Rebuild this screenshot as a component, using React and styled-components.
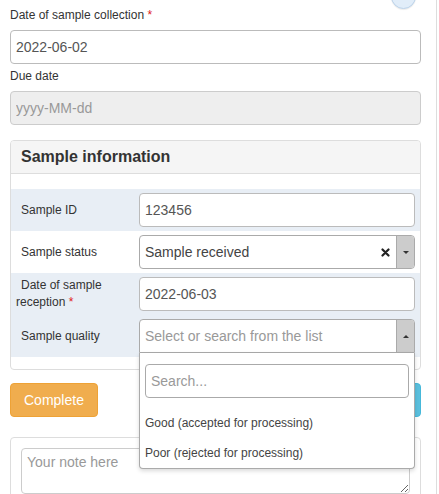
import React from "react";
import styled, { createGlobalStyle } from "styled-components";

const GlobalStyle = createGlobalStyle`
  body {
    margin: 0;
    background: #fff;
    font-family: "Liberation Sans", Arial, sans-serif;
    font-size: 12px;
    color: #333;
  }
  * { box-sizing: border-box; }
`;

const rows = [
  { label: "Sample ID", kind: "input", value: "123456", shade: true },
  { label: "Sample status", kind: "select", value: "Sample received", shade: false },
  { label: "Date of sample reception", required: true, kind: "input", value: "2022-06-03", shade: true },
  { label: "Sample quality", kind: "open", shade: true },
];

const options = ["Good (accepted for processing)", "Poor (rejected for processing)"];

const Caret = ({ up }) => <CaretMark $up={up} />;

const ClearIcon = () => (
  <svg width="9" height="9" viewBox="0 0 9 9">
    <path d="M1.5 1.5 L7.5 7.5 M7.5 1.5 L1.5 7.5" stroke="#222" strokeWidth="2.2" strokeLinecap="round" />
  </svg>
);

const Select = ({ value, open, placeholder }) => (
  <SelectWrap>
    <SelectBox $open={open}>
      <SelectValue $placeholder={!value}>{value || placeholder}</SelectValue>
      {value && (
        <Clear>
          <ClearIcon />
        </Clear>
      )}
      <ArrowButton $open={open}>
        <Caret up={open} />
      </ArrowButton>
    </SelectBox>
    {open && (
      <Dropdown>
        <SearchWrap>
          <SearchInput placeholder="Search..." />
        </SearchWrap>
        <OptionList>
          {options.map((o) => (
            <Option key={o}>{o}</Option>
          ))}
        </OptionList>
      </Dropdown>
    )}
  </SelectWrap>
);

const App = () => {
  return (
    <>
      <GlobalStyle />
      <Page>
        <TopBar>
          <RoundButton />
        </TopBar>
        <Label>
          Date of sample collection <Req>*</Req>
        </Label>
        <Input defaultValue="2022-06-02" />
        <Label $gap>Due date</Label>
        <Input disabled placeholder="yyyy-MM-dd" />

        <Panel>
          <PanelHeading>Sample information</PanelHeading>
          <PanelBody>
            {rows.map((r) => (
              <Row key={r.label} $shade={r.shade}>
                <RowLabel>
                  {r.label}
                  {r.required && (
                    <>
                      {" "}
                      <Req>*</Req>
                    </>
                  )}
                </RowLabel>
                <RowField>
                  {r.kind === "input" && <Input defaultValue={r.value} />}
                  {r.kind === "select" && <Select value={r.value} />}
                  {r.kind === "open" && <Select open placeholder="Select or search from the list" />}
                </RowField>
              </Row>
            ))}
          </PanelBody>
        </Panel>

        <Actions>
          <Button $color="warning">Complete</Button>
          <Button $color="info">Save</Button>
        </Actions>

        <Well>
          <Note placeholder="Your note here" />
        </Well>
      </Page>
    </>
  );
};

export default App;

const Page = styled.div`
  width: 437px;
  height: 494px;
  overflow: hidden;
  border-right: 1px solid #ddd;
  padding: 0 15px 0 10px;
`;

const TopBar = styled.div`
  height: 7px;
  display: flex;
  justify-content: flex-end;
  padding-right: 5px;
`;

const RoundButton = styled.div`
  width: 25px;
  height: 25px;
  margin-top: -16px;
  border-radius: 50%;
  background: #e1edf9;
  border: 1px solid #bcd3ea;
  box-shadow: 0 1px 1px rgba(0, 0, 0, 0.08);
`;

const Label = styled.div`
  line-height: 17px;
  margin-top: ${(p) => (p.$gap ? "4px" : "0")};
  margin-bottom: 6px;
  color: #333;
`;

const Req = styled.span`
  color: #e02020;
`;

const Input = styled.input`
  display: block;
  width: 100%;
  height: 34px;
  padding: 0 5px;
  border: 1px solid #bbb;
  border-radius: 4px;
  font-family: inherit;
  font-size: 14px;
  color: #555;
  background: #fff;
  outline: none;

  &:disabled {
    background: #eee;
    border-color: #ccc;
  }
  &::placeholder {
    color: #999;
  }
`;

const Panel = styled.div`
  margin-top: 15px;
  border: 1px solid #ddd;
  border-radius: 4px;
`;

const PanelHeading = styled.div`
  height: 33px;
  display: flex;
  align-items: center;
  padding-left: 10px;
  background: #f5f5f5;
  border-bottom: 1px solid #ddd;
  border-radius: 3px 3px 0 0;
  font-size: 16px;
  font-weight: bold;
  color: #333;
`;

const PanelBody = styled.div`
  padding: 15px 0 12px;
`;

const Row = styled.div`
  display: grid;
  grid-template-columns: 123px 1fr;
  align-items: center;
  padding: 4px 5px 4px 0;
  background: ${(p) => (p.$shade ? "#e8eef5" : "#fff")};
`;

const RowLabel = styled.div`
  padding-left: 5px;
  padding-right: 8px;
  text-indent: 5px;
  line-height: 17px;
  color: #333;
`;

const RowField = styled.div`
  padding-left: 5px;
`;

const SelectWrap = styled.div`
  position: relative;
`;

const SelectBox = styled.div`
  display: flex;
  align-items: stretch;
  height: 34px;
  border: 1px solid #aaa;
  border-radius: ${(p) => (p.$open ? "4px 4px 0 0" : "4px")};
  background: #fff;
  overflow: hidden;
`;

const SelectValue = styled.div`
  flex: 1;
  display: flex;
  align-items: center;
  padding-left: 5px;
  font-size: 14px;
  color: ${(p) => (p.$placeholder ? "#999" : "#444")};
  white-space: nowrap;
`;

const Clear = styled.div`
  display: flex;
  align-items: center;
  padding-right: 6px;
`;

const ArrowButton = styled.div`
  width: 18px;
  display: flex;
  align-items: center;
  justify-content: center;
  background: #ccc;
  border-left: 1px solid #aaa;
`;

const CaretMark = styled.span`
  width: 0;
  height: 0;
  border-left: 3.5px solid transparent;
  border-right: 3.5px solid transparent;
  ${(p) => (p.$up ? "border-bottom: 3.5px solid #333;" : "border-top: 3.5px solid #333;")}
`;

const Dropdown = styled.div`
  position: absolute;
  top: 100%;
  left: 0;
  right: 0;
  z-index: 10;
  background: #fff;
  border: 1px solid #aaa;
  border-top: none;
  border-radius: 0 0 4px 4px;
  box-shadow: 0 2px 4px rgba(0, 0, 0, 0.15);
`;

const SearchWrap = styled.div`
  padding: 11px 5px 0;
`;

const SearchInput = styled(Input)`
  border-color: #aaa;
`;

const OptionList = styled.div`
  padding-top: 10px;
`;

const Option = styled.div`
  height: 30px;
  line-height: 30px;
  padding: 0 5px;
  font-size: 12px;
  color: #444;
`;

const Actions = styled.div`
  margin-top: 13px;
  display: flex;
  justify-content: space-between;
`;

const Button = styled.div`
  height: 34px;
  padding: 0 13px;
  display: flex;
  align-items: center;
  border-radius: 4px;
  font-size: 14px;
  color: #fff;
  background: ${(p) => (p.$color === "info" ? "#5bc0de" : "#f0ad4e")};
  border: 1px solid ${(p) => (p.$color === "info" ? "#46b8da" : "#eea236")};
`;

const Well = styled.div`
  margin-top: 20px;
  border: 1px solid #ddd;
  border-radius: 4px;
  padding: 10px;
`;

const Note = styled.textarea`
  display: block;
  width: 100%;
  height: 46px;
  padding: 3px 5px;
  border: 1px solid #ccc;
  border-radius: 4px;
  font-family: inherit;
  font-size: 14px;
  line-height: 20px;
  color: #555;
  outline: none;

  &::placeholder {
    color: #999;
  }
`;
